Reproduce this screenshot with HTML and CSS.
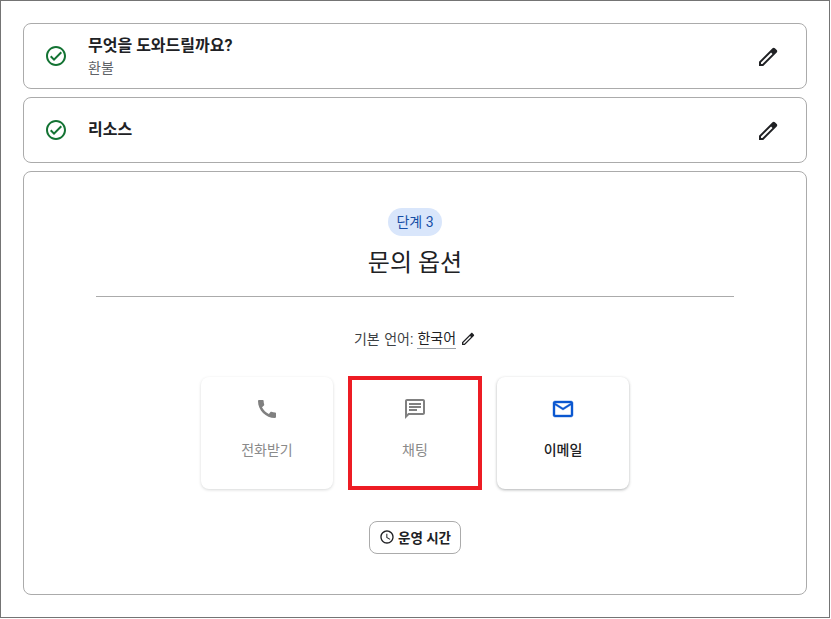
FILE: index.html
```html
<!DOCTYPE html>
<html lang="ko">
<head>
  <meta charset="UTF-8" />
  <title>문의 옵션</title>
  <link rel="stylesheet" href="styles.css">
</head>
<body>
  <div class="frame">
    <!-- Completed steps -->
    <div class="done-card">
      <svg class="check-icon" viewBox="0 0 24 24"><path d="M12 2C6.48 2 2 6.48 2 12s4.48 10 10 10 10-4.48 10-10S17.52 2 12 2zm0 18c-4.41 0-8-3.59-8-8s3.59-8 8-8 8 3.59 8 8-3.59 8-8 8zm4.59-12.42L10 14.17l-2.59-2.58L6 13l4 4 8-8z"/></svg>
      <div class="done-text">
        <div class="done-title">무엇을 도와드릴까요?</div>
        <div class="done-value">환불</div>
      </div>
      <svg class="edit-icon" viewBox="0 0 24 24"><path fill-rule="evenodd" d="M3 21v-4.2L16.5 3.3c.7-.7 1.7-.7 2.4 0l1.8 1.8c.7.7.7 1.7 0 2.4L7.2 21H3zM5 19h1.4L16.5 8.9l-1.4-1.4L5 17.6V19z"/></svg>
    </div>
    <div class="done-card">
      <svg class="check-icon" viewBox="0 0 24 24"><path d="M12 2C6.48 2 2 6.48 2 12s4.48 10 10 10 10-4.48 10-10S17.52 2 12 2zm0 18c-4.41 0-8-3.59-8-8s3.59-8 8-8 8 3.59 8 8-3.59 8-8 8zm4.59-12.42L10 14.17l-2.59-2.58L6 13l4 4 8-8z"/></svg>
      <div class="done-text">
        <div class="done-title">리소스</div>
      </div>
      <svg class="edit-icon" viewBox="0 0 24 24"><path fill-rule="evenodd" d="M3 21v-4.2L16.5 3.3c.7-.7 1.7-.7 2.4 0l1.8 1.8c.7.7.7 1.7 0 2.4L7.2 21H3zM5 19h1.4L16.5 8.9l-1.4-1.4L5 17.6V19z"/></svg>
    </div>

    <!-- Current step -->
    <div class="step-card">
      <span class="step-badge">단계 3</span>
      <h1 class="step-title">문의 옵션</h1>
      <div class="step-divider"></div>
      <div class="language">
        기본 언어: <span class="language-value">한국어</span>
        <svg class="language-edit" viewBox="0 0 24 24"><path fill-rule="evenodd" d="M3 21v-4.2L16.5 3.3c.7-.7 1.7-.7 2.4 0l1.8 1.8c.7.7.7 1.7 0 2.4L7.2 21H3zM5 19h1.4L16.5 8.9l-1.4-1.4L5 17.6V19z"/></svg>
      </div>
      <div class="options">
        <div class="option option-disabled">
          <svg class="option-icon" viewBox="0 0 24 24"><path d="M20.01 15.38c-1.23 0-2.42-.2-3.53-.56-.35-.12-.74-.03-1.01.24l-1.57 1.97c-2.83-1.35-5.48-3.9-6.89-6.83l1.95-1.66c.27-.28.35-.67.24-1.02-.37-1.11-.56-2.3-.56-3.53 0-.54-.45-.99-.99-.99H4.19C3.65 3 3 3.24 3 3.99 3 13.28 10.73 21 20.01 21c.71 0 .99-.63.99-1.18v-3.45c0-.54-.45-.99-.99-.99z"/></svg>
          <span>전화받기</span>
        </div>
        <div class="option option-disabled option-marked">
          <svg class="option-icon" viewBox="0 0 24 24"><path d="M20 2H4c-1.1 0-1.99.9-1.99 2L2 22l4-4h14c1.1 0 2-.9 2-2V4c0-1.1-.9-2-2-2zm0 14H5.17L4 17.17V4h16v12zM6 12h8v2H6zm0-3h12v2H6zm0-3h12v2H6z"/></svg>
          <span>채팅</span>
        </div>
        <div class="option">
          <svg class="option-icon option-icon-blue" viewBox="0 0 24 24"><path d="M20 4H4c-1.1 0-1.99.9-1.99 2L2 18c0 1.1.9 2 2 2h16c1.1 0 2-.9 2-2V6c0-1.1-.9-2-2-2zm0 14H4V8l8 5 8-5v10zm-8-7L4 6h16l-8 5z"/></svg>
          <span>이메일</span>
        </div>
      </div>
      <button class="hours-btn">
        <svg class="hours-icon" viewBox="0 0 24 24"><path d="M11.99 2C6.47 2 2 6.48 2 12s4.47 10 9.99 10C17.52 22 22 17.52 22 12S17.52 2 11.99 2zM12 20c-4.42 0-8-3.58-8-8s3.58-8 8-8 8 3.58 8 8-3.58 8-8 8zm.5-13H11v6l5.25 3.15.75-1.23-4.5-2.67z"/></svg>
        운영 시간
      </button>
    </div>
  </div>
</body>
</html>
```

FILE: styles.css
```css
* {
  margin: 0;
  padding: 0;
  box-sizing: border-box;
}

body {
  font-family: Roboto, 'Noto Sans CJK KR', sans-serif;
  background: white;
  color: #202124;
}

.frame {
  width: 830px;
  height: 618px;
  border: 1px solid #747474;
  padding: 22px 22px 0;
  display: flex;
  flex-direction: column;
  gap: 8px;
}

.done-card {
  height: 66px;
  border: 1px solid #ababab;
  border-radius: 8px;
  display: flex;
  align-items: center;
  padding: 0 26px 0 20px;
}

.check-icon {
  width: 24px;
  height: 24px;
  fill: #137333;
  flex-shrink: 0;
}

.done-text {
  flex: 1;
  margin-left: 20px;
}

.done-title {
  font-size: 16px;
  font-weight: 700;
  line-height: 22px;
}

.done-value {
  font-size: 14px;
  line-height: 20px;
  margin-top: 1px;
  color: #5f6368;
}

.edit-icon {
  width: 24px;
  height: 24px;
  fill: #202124;
  flex-shrink: 0;
  margin-top: 2px;
}

.step-card {
  height: 424px;
  border: 1px solid #ababab;
  border-radius: 8px;
  display: flex;
  flex-direction: column;
  align-items: center;
  padding-top: 36px;
}

.step-badge {
  background: #d9e6fb;
  color: #174ea6;
  font-size: 14px;
  line-height: 20px;
  height: 28px;
  padding: 4px 8px;
  border-radius: 14px;
}

.step-title {
  font-size: 24px;
  font-weight: 400;
  line-height: 32px;
  margin-top: 11px;
}

.step-divider {
  width: 638px;
  height: 1px;
  background: #ababab;
  margin-top: 17px;
}

.language {
  font-size: 14px;
  line-height: 20px;
  word-spacing: 1px;
  margin-top: 31px;
  display: flex;
  align-items: center;
  gap: 4px;
  color: #3c4043;
}

.language-value {
  border-bottom: 1px solid #9aa0a6;
  color: #202124;
}

.language-edit {
  width: 16px;
  height: 16px;
  fill: #202124;
}

.options {
  display: flex;
  gap: 16px;
  margin-top: 28px;
}

.option {
  position: relative;
  width: 132px;
  height: 112px;
  border-radius: 8px;
  background: white;
  box-shadow: 0 1px 3px rgba(60,64,67,0.4);
  display: flex;
  flex-direction: column;
  align-items: center;
  padding-top: 20px;
  font-size: 14px;
  font-weight: 500;
  line-height: 20px;
}

.option-icon {
  width: 24px;
  height: 24px;
  fill: #808080;
  margin-bottom: 19px;
}

.option-icon-blue {
  fill: #0b57d0;
  stroke: #0b57d0;
  stroke-width: 0.4;
}

.option-disabled {
  color: #8a8a8a;
  box-shadow: 0 1px 3px rgba(60,64,67,0.2);
  font-weight: 400;
}

/* red annotation box drawn over the chat option */
.option-marked {
  box-shadow: none;
}

.option-marked::after {
  content: '';
  position: absolute;
  inset: -1px;
  border: 4px solid #ed1c24;
}

.hours-btn {
  margin-top: 32px;
  height: 33px;
  padding: 0 9px 1px;
  display: flex;
  align-items: center;
  gap: 3px;
  background: white;
  border: 1px solid #ababab;
  border-radius: 8px;
  font-family: inherit;
  font-size: 13.5px;
  font-weight: 700;
  color: #202124;
}

.hours-icon {
  width: 16px;
  height: 16px;
  fill: #202124;
}
```
